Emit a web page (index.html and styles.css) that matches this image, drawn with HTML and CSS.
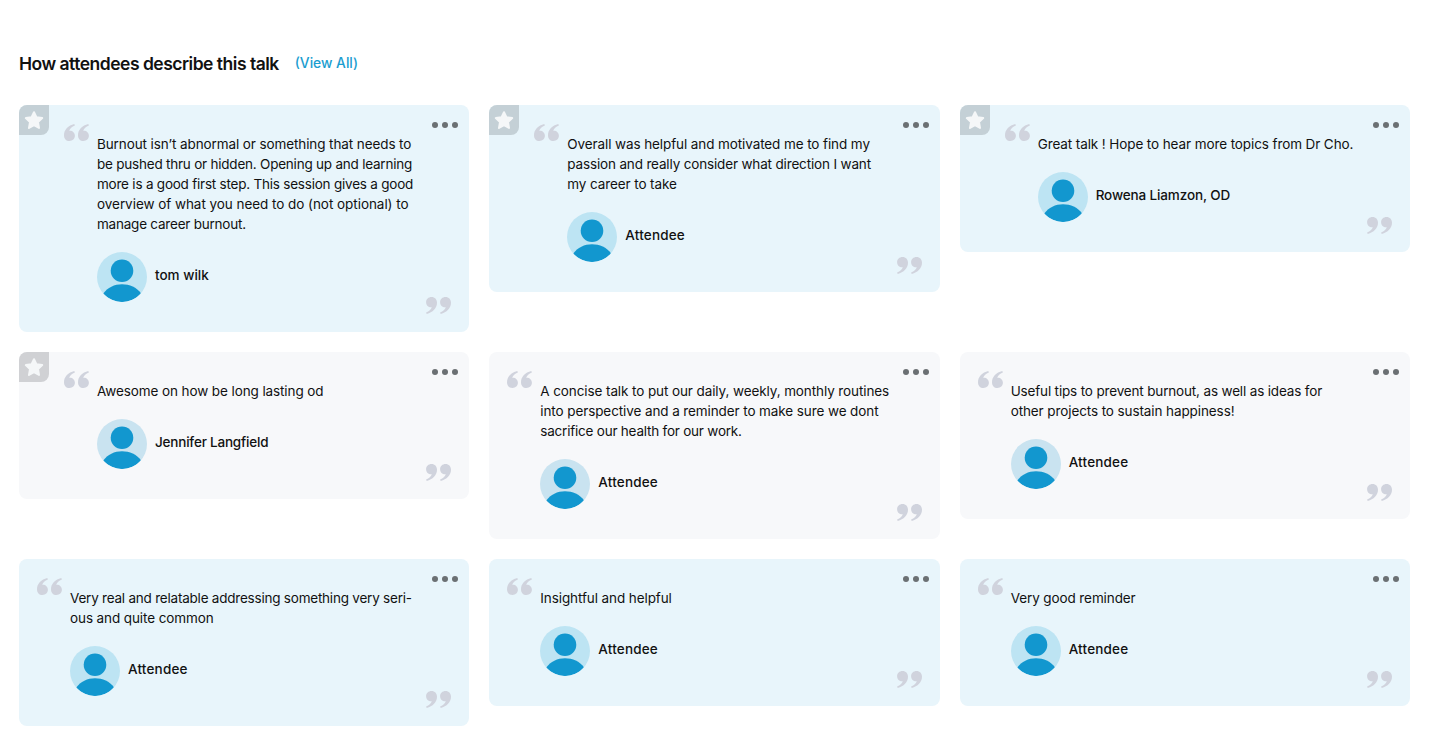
FILE: index.html
```html
<!DOCTYPE html>
<html lang="en">
<head>
<meta charset="utf-8">
<title>How attendees describe this talk</title>
<link rel="stylesheet" href="styles.css">
</head>
<body>
<svg class="defs" aria-hidden="true">
  <symbol id="quote" viewBox="0 0 25 17"><path d="M10.3 0C4.3 1.4 0 5.8 0 11.2C0 14.7 2.2 17 5.4 17C8.6 17 10.9 14.8 10.9 11.8C10.9 8.8 8.7 6.7 5.8 6.7L5.2 6.8C5.9 4.6 7.9 2.7 10.9 1.5Z"/><path d="M24.3 0C18.3 1.4 14 5.8 14 11.2C14 14.7 16.2 17 19.4 17C22.6 17 24.9 14.8 24.9 11.8C24.9 8.8 22.7 6.7 19.8 6.7L19.2 6.8C19.9 4.6 21.9 2.7 24.9 1.5Z"/></symbol>
  <symbol id="star" viewBox="0 0 30 30"><path d="M15 7.2L17.4 12.3L23.2 13.1L19 17.1L20 22.9L15 20.2L10 22.9L11 17.1L6.8 13.1L12.6 12.3Z" stroke-width="2" stroke-linejoin="round"/></symbol>
  <symbol id="dots" viewBox="0 0 26 6"><circle cx="3" cy="3" r="3"/><circle cx="13" cy="3" r="3"/><circle cx="23" cy="3" r="3"/></symbol>
  <symbol id="person" viewBox="0 0 50 50"><circle cx="25" cy="18.7" r="11.3"/><path d="M6.3 41.6C10.5 35.5 17.5 32.2 25 32.2S39.8 35.3 44 41.3A25 25 0 0 1 6.3 41.6Z"/></symbol>
</svg>
<main class="reviews">
  <header class="heading"><h2 class="title">How attendees describe this talk</h2><a class="view-all">(View All)</a></header>
  <section class="grid">
    <article class="card starred">
      <span class="badge"><svg><use href="#star"/></svg></span><svg class="quote open"><use href="#quote"/></svg><svg class="menu"><use href="#dots"/></svg>
      <p class="text">Burnout isn’t abnormal or something that needs to<br><span class="tight">be pushed thru or hidden. Opening up and learning<br>more is a good first step. This session gives a good</span><br><span class="loose">overview of what you need to do (not optional) to</span><br><span class="tight">manage career burnout.</span></p>
      <div class="author"><svg class="avatar"><use href="#person"/></svg><span class="name">tom wilk</span></div>
      <svg class="quote close"><use href="#quote"/></svg>
    </article>
    <article class="card starred">
      <span class="badge"><svg><use href="#star"/></svg></span><svg class="quote open"><use href="#quote"/></svg><svg class="menu"><use href="#dots"/></svg>
      <p class="text">Overall was helpful and motivated me to find my<br><span class="snug">passion and really consider what direction I want</span><br>my career to take</p>
      <div class="author"><svg class="avatar"><use href="#person"/></svg><span class="name wide">Attendee</span></div>
      <svg class="quote close"><use href="#quote"/></svg>
    </article>
    <article class="card starred">
      <span class="badge"><svg><use href="#star"/></svg></span><svg class="quote open"><use href="#quote"/></svg><svg class="menu"><use href="#dots"/></svg>
      <p class="text">Great talk ! Hope to hear more topics from Dr Cho.</p>
      <div class="author"><svg class="avatar"><use href="#person"/></svg><span class="name snug">Rowena Liamzon, OD</span></div>
      <svg class="quote close"><use href="#quote"/></svg>
    </article>
    <article class="card gray starred">
      <span class="badge"><svg><use href="#star"/></svg></span><svg class="quote open"><use href="#quote"/></svg><svg class="menu"><use href="#dots"/></svg>
      <p class="text">Awesome on how be long lasting od</p>
      <div class="author"><svg class="avatar"><use href="#person"/></svg><span class="name tight">Jennifer Langfield</span></div>
      <svg class="quote close"><use href="#quote"/></svg>
    </article>
    <article class="card gray">
      <svg class="quote open"><use href="#quote"/></svg><svg class="menu"><use href="#dots"/></svg>
      <p class="text">A concise talk to put our daily, weekly, monthly routines<br>into perspective and a reminder to make sure we dont<br><span class="tight">sacrifice our health for our work.</span></p>
      <div class="author"><svg class="avatar"><use href="#person"/></svg><span class="name wide">Attendee</span></div>
      <svg class="quote close"><use href="#quote"/></svg>
    </article>
    <article class="card gray">
      <svg class="quote open"><use href="#quote"/></svg><svg class="menu"><use href="#dots"/></svg>
      <p class="text"><span class="snug">Useful tips to prevent burnout, as well as ideas for</span><br>other projects to sustain happiness!</p>
      <div class="author"><svg class="avatar"><use href="#person"/></svg><span class="name wide">Attendee</span></div>
      <svg class="quote close"><use href="#quote"/></svg>
    </article>
    <article class="card">
      <svg class="quote open"><use href="#quote"/></svg><svg class="menu"><use href="#dots"/></svg>
      <p class="text"><span class="tight">Very real and relatable addressing something very seri-</span><br>ous and quite common</p>
      <div class="author"><svg class="avatar"><use href="#person"/></svg><span class="name wide">Attendee</span></div>
      <svg class="quote close"><use href="#quote"/></svg>
    </article>
    <article class="card">
      <svg class="quote open"><use href="#quote"/></svg><svg class="menu"><use href="#dots"/></svg>
      <p class="text">Insightful and helpful</p>
      <div class="author"><svg class="avatar"><use href="#person"/></svg><span class="name wide">Attendee</span></div>
      <svg class="quote close"><use href="#quote"/></svg>
    </article>
    <article class="card">
      <svg class="quote open"><use href="#quote"/></svg><svg class="menu"><use href="#dots"/></svg>
      <p class="text">Very good reminder</p>
      <div class="author"><svg class="avatar"><use href="#person"/></svg><span class="name wide">Attendee</span></div>
      <svg class="quote close"><use href="#quote"/></svg>
    </article>
  </section>
</main>
</body>
</html>
```

FILE: styles.css
```css
* { box-sizing: border-box; }
body { margin: 0; background: #fff; color: #111; font-family: Inter, "Liberation Sans", sans-serif; }
svg { display: block; }
.defs { position: absolute; width: 0; height: 0; }
.reviews { padding: 49px 20px 20px 19px; }
.heading { display: flex; align-items: center; gap: 16px; height: 30px; margin-bottom: 26px; }
.title { margin: 0; font-size: 17.5px; font-weight: 600; letter-spacing: -0.5px; line-height: 30px; color: #111; }
.view-all { font-size: 13.8px; font-weight: 500; color: #1a9dd0; line-height: 28px; padding-bottom: 2px; }
.grid { display: grid; grid-template-columns: repeat(3, 1fr); gap: 20px; align-items: start; }
.card { position: relative; padding: 29px 18px 30px 51px; background: #e8f5fb; border-radius: 8px; }
.card.gray { background: #f7f8fa; }
.card.starred { padding-left: 78px; }
.badge { position: absolute; left: 0; top: 0; width: 30px; height: 30px; background: #c4d0d6; border-radius: 8px 0 8px 0; }
.gray .badge { background: #d0d1d4; }
.badge svg { width: 30px; height: 30px; fill: #f5f7f8; stroke: #f5f7f8; }
.quote { position: absolute; width: 25px; height: 17px; fill: #d0d3dd; }
.open { left: 18px; top: 19px; }
.starred .open { left: 45px; }
.close { right: 18px; bottom: 18px; transform: rotate(180deg); }
.menu { position: absolute; right: 11px; top: 17px; width: 26px; height: 6px; fill: #6b7073; }
.text { margin: 0 0 18px; font-size: 13.5px; line-height: 20px; letter-spacing: -0.1px; white-space: nowrap; color: #111; }
.author { display: flex; align-items: center; gap: 8px; height: 50px; }
.avatar { width: 50px; height: 50px; border-radius: 50%; background: #bde4f3; fill: #1297cf; }
.gray .avatar { background: #c9e3f0; }
.name { font-size: 13.5px; font-weight: 500; line-height: 20px; padding-bottom: 5px; }
.text .tight { letter-spacing: -0.22px; }
.text .snug { letter-spacing: -0.16px; }
.text .loose { letter-spacing: -0.05px; }
.name.tight { letter-spacing: -0.2px; }
.name.snug { letter-spacing: -0.13px; }
.name.wide { letter-spacing: 0.18px; }
```
